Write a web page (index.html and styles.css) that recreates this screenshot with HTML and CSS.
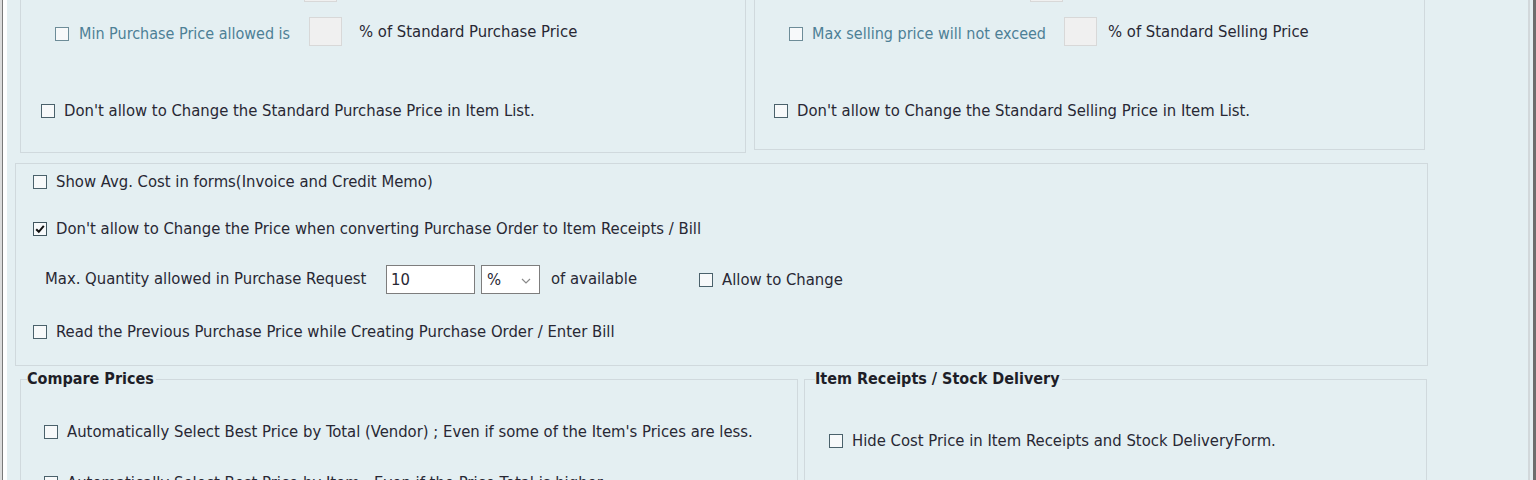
FILE: index.html
```html
<!DOCTYPE html>
<html>
<head>
<meta charset="utf-8">
<title>Purchase Settings</title>
<link rel="stylesheet" href="styles.css">
</head>
<body>
<div class="window">
  <div class="edge-light"></div>
  <div class="edge-dark"></div>
  <div class="gutter-left"></div>
  <div class="panel">
    <div class="content">
      <div class="top-row">
        <div class="box box-purchase">
          <div class="row row-pct row-cut">
            <span class="cb"></span><span class="lbl lbl-cut-p"></span><span class="num-box"></span>
          </div>
          <div class="row row-pct">
            <span class="cb cb-soft"></span><span class="lbl lbl-p">Min Purchase Price allowed is</span><span class="num-box"></span><span class="pct-text">% of Standard Purchase Price</span>
          </div>
          <div class="row row-check row-last">
            <span class="cb"></span><span class="txt">Don't allow to Change the Standard Purchase Price in Item List.</span>
          </div>
        </div>
        <div class="box box-selling">
          <div class="row row-pct row-cut">
            <span class="cb"></span><span class="lbl lbl-cut-s"></span><span class="num-box"></span>
          </div>
          <div class="row row-pct">
            <span class="cb cb-soft"></span><span class="lbl lbl-s">Max selling price will not exceed</span><span class="num-box"></span><span class="pct-text pct-s">% of Standard Selling Price</span>
          </div>
          <div class="row row-check row-last">
            <span class="cb"></span><span class="txt">Don't allow to Change the Standard Selling Price in Item List.</span>
          </div>
        </div>
      </div>

      <div class="box box-middle">
        <div class="row row-check">
          <span class="cb"></span><span class="txt">Show Avg. Cost in forms(Invoice and Credit Memo)</span>
        </div>
        <div class="row row-check row-gap">
          <span class="cb cb-checked"><svg viewBox="0 0 12 12" width="12" height="12"><path d="M2.2 6.2 L4.8 8.8 L9.8 2.8" fill="none" stroke="#111" stroke-width="2"/></svg></span><span class="txt">Don't allow to Change the Price when converting Purchase Order to Item Receipts / Bill</span>
        </div>
        <div class="row row-qty">
          <span class="qty-label">Max. Quantity allowed in Purchase Request</span>
          <span class="qty-input">10</span>
          <span class="qty-select"><span class="sel-val">%</span><svg class="chev" viewBox="0 0 10 6" width="10" height="6"><polyline points="1,1 5,5 9,1" fill="none" stroke="#8a8a8a" stroke-width="1.2"/></svg></span>
          <span class="of-avail">of available</span>
          <span class="cb"></span><span class="txt">Allow to Change</span>
        </div>
        <div class="row row-check row-gap">
          <span class="cb"></span><span class="txt">Read the Previous Purchase Price while Creating Purchase Order / Enter Bill</span>
        </div>
      </div>

      <div class="bottom-row">
        <fieldset class="group group-compare">
          <legend class="group-title">Compare Prices</legend>
          <div class="row row-check compare-first">
            <span class="cb"></span><span class="txt">Automatically Select Best Price by Total (Vendor) ; Even if some of the Item's Prices are less.</span>
          </div>
          <div class="row row-check compare-second">
            <span class="cb"></span><span class="txt">Automatically Select Best Price by Item ; Even if the Price Total is higher.</span>
          </div>
        </fieldset>
        <fieldset class="group group-receipts">
          <legend class="group-title">Item Receipts / Stock Delivery</legend>
          <div class="row row-check receipts-first">
            <span class="cb"></span><span class="txt">Hide Cost Price in Item Receipts and Stock DeliveryForm.</span>
          </div>
        </fieldset>
      </div>
    </div>
  </div>
  <div class="gutter-right"></div>
  <div class="edge-right"></div>
</div>
</body>
</html>
```

FILE: styles.css
```css
html, body {
  margin: 0;
  padding: 0;
}

body {
  font-family: "DejaVu Sans Condensed", "DejaVu Sans", sans-serif;
  font-size: 16.5px;
  color: #282834;
  background: #ffffff;
}

.window {
  display: flex;
  height: 480px;
  overflow: hidden;
}

.edge-light {
  width: 2px;
  background: #dcdcdc;
}

.edge-dark {
  width: 1px;
  background: #7a7a7a;
}

.gutter-left {
  width: 4px;
  background: #ffffff;
}

.panel {
  flex: 1;
  background: #e4eff2;
  border-right: 2px solid #d2d8db;
  overflow: hidden;
}

.gutter-right {
  width: 3px;
  background: #e4eff2;
}

.edge-right {
  width: 3px;
  background: #6e6e6e;
}

.content {
  margin-top: -60px;
  display: flex;
  flex-direction: column;
}

/* generic boxes */
.box {
  box-sizing: border-box;
  border: 1px solid #d0d9dd;
}

.top-row {
  display: flex;
  align-items: flex-start;
  gap: 8px;
  margin-left: 13px;
}

.box-purchase {
  width: 726px;
  height: 213px;
  padding: 32px 0 0 20px;
}

.box-selling {
  width: 671px;
  height: 210px;
  padding: 32px 0 0 19px;
}

/* rows */
.row {
  display: flex;
  align-items: center;
  white-space: nowrap;
}

.row-check {
  height: 18px;
}

.row-pct {
  height: 29px;
  margin-left: 14px;
}

.box-selling .row-pct {
  margin-left: 15px;
}

.row-pct + .row-pct {
  margin-top: 15px;
}

.row-last {
  margin-top: 56px;
}

/* checkbox */
.cb {
  box-sizing: border-box;
  flex: none;
  width: 14px;
  height: 14px;
  border: 1px solid #4a616b;
  background: #f7f9fa;
  margin-right: 9px;
  display: inline-flex;
  align-items: center;
  justify-content: center;
}

.cb-soft {
  border-color: #6d8c98;
  margin-right: 10px;
  margin-top: 5px;
}

.box-selling .cb-soft {
  margin-right: 9px;
}

.cb-checked {
  border-color: #40555e;
}

.txt {
  line-height: 18px;
}

/* percent rows */
.lbl {
  flex: none;
  color: #4d8096;
  font-size: 16px;
  line-height: 18px;
  padding-top: 4px;
}

.lbl-p { width: 230px; }
.lbl-s { width: 252px; }
.lbl-cut-p { width: 226px; }
.lbl-cut-s { width: 218px; }

.num-box {
  flex: none;
  box-sizing: border-box;
  width: 33px;
  height: 29px;
  background: #f0f0f0;
  border: 1px solid #d8d8d8;
}

.pct-text {
  margin-left: 17px;
  line-height: 18px;
}

.pct-s {
  margin-left: 11px;
}

/* middle box */
.box-middle {
  margin: 10px 0 0 8px;
  width: 1413px;
  height: 203px;
  padding: 9px 0 0 17px;
}

.row-gap {
  margin-top: 29px;
}

.row-qty {
  height: 29px;
  margin-top: 27px;
  padding-left: 12px;
}

.qty-label {
  flex: none;
  width: 341px;
  line-height: 18px;
  padding-bottom: 2px;
}

.qty-input {
  flex: none;
  box-sizing: border-box;
  width: 89px;
  height: 29px;
  background: #ffffff;
  border: 1px solid #7d7d7d;
  padding: 5px 0 0 4px;
  line-height: 18px;
}

.qty-select {
  flex: none;
  box-sizing: border-box;
  width: 59px;
  height: 29px;
  margin-left: 6px;
  background: #ffffff;
  border: 1px solid #7d7d7d;
  display: flex;
  align-items: center;
  justify-content: space-between;
  padding: 0 8px 0 5px;
}

.sel-val {
  line-height: 18px;
}

.chev {
  margin-top: 3px;
}

.of-avail {
  flex: none;
  width: 148px;
  margin-left: 11px;
  line-height: 18px;
  padding-bottom: 2px;
}

/* bottom groups */
.bottom-row {
  display: flex;
  gap: 6px;
  margin: 4px 0 0 13px;
  align-items: flex-start;
}

.group {
  box-sizing: border-box;
  margin: 0;
  padding: 0;
  min-width: 0;
  height: 220px;
  border: 1px solid #d0d9dd;
}

.group-compare {
  width: 778px;
  padding-left: 23px;
}

.group-receipts {
  width: 623px;
  padding-left: 24px;
}

.group-title {
  font-weight: bold;
  font-size: 16px;
  line-height: 18px;
  padding: 0 2px 0 0;
  color: #1e1e28;
}

.group-compare .group-title {
  margin-left: -17px;
}

.group-receipts .group-title {
  margin-left: -14px;
}

.compare-first {
  margin-top: 35px;
}

.compare-second {
  margin-top: 33px;
}

.receipts-first {
  margin-top: 44px;
}
```
